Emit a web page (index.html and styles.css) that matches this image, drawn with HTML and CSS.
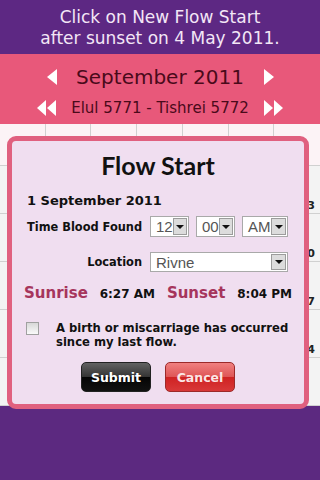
FILE: index.html
```html
<!DOCTYPE html>
<html>
  <head>
    <meta charset="UTF-8" />
    <title>Flow Start</title>
    <link rel="stylesheet" href="styles.css">
  </head>
  <body>
    <div class="screen">
      <header class="notice">Click on New Flow Start<br />after sunset on 4 May 2011.</header>
      <section class="month-bar">
        <div class="month-row">
          <span class="tri tri-left"></span>
          <h1 class="month">September 2011</h1>
          <span class="tri tri-right"></span>
        </div>
        <div class="heb-row">
          <span class="dbl"><span class="tri tri-left"></span><span class="tri tri-left"></span></span>
          <span class="heb">Elul 5771 - Tishrei 5772</span>
          <span class="dbl"><span class="tri tri-right"></span><span class="tri tri-right"></span></span>
        </div>
      </section>
      <div class="calendar">
        <div class="grid">
          <div class="cell head"></div><div class="cell head"></div><div class="cell head"></div><div class="cell head"></div><div class="cell head"></div><div class="cell head"></div><div class="cell head"></div>
          <div class="cell"></div><div class="cell"></div><div class="cell"></div><div class="cell"></div><div class="cell"></div><div class="cell"></div><div class="cell">3</div>
          <div class="cell"></div><div class="cell"></div><div class="cell"></div><div class="cell"></div><div class="cell"></div><div class="cell"></div><div class="cell">10</div>
          <div class="cell"></div><div class="cell"></div><div class="cell"></div><div class="cell"></div><div class="cell"></div><div class="cell"></div><div class="cell">17</div>
          <div class="cell"></div><div class="cell"></div><div class="cell"></div><div class="cell"></div><div class="cell"></div><div class="cell"></div><div class="cell">24</div>
          <div class="cell"></div><div class="cell"></div><div class="cell"></div><div class="cell"></div><div class="cell"></div><div class="cell"></div><div class="cell"></div>
        </div>

        <div class="dialog">
          <h2 class="dialog-title">Flow Start</h2>
          <p class="date">1 September 2011</p>
          <div class="form">
            <label class="label">Time Blood Found</label>
            <div class="controls">
              <span class="select w-12"><span class="value">12</span><span class="arrow"></span></span>
              <span class="select w-00"><span class="value">00</span><span class="arrow"></span></span>
              <span class="select w-am"><span class="value">AM</span><span class="arrow"></span></span>
            </div>
            <label class="label">Location</label>
            <div class="controls">
              <span class="select w-loc"><span class="value">Rivne</span><span class="arrow"></span></span>
            </div>
          </div>
          <div class="sun">
            <span class="sun-label">Sunrise</span>
            <span class="sun-time">6:27 AM</span>
            <span class="sun-label">Sunset</span>
            <span class="sun-time">8:04 PM</span>
          </div>
          <div class="check-row">
            <span class="checkbox"></span>
            <p class="check-text">A birth or miscarriage has occurred<br />since my last flow.</p>
          </div>
          <div class="buttons">
            <button class="btn btn-submit">Submit</button>
            <button class="btn btn-cancel">Cancel</button>
          </div>
        </div>
      </div>
    </div>
  </body>
</html>
```

FILE: styles.css
```css
* { box-sizing: border-box; }
body {
	margin: 0;
	background-color: #5c2980;
	font-family: "DejaVu Sans", Verdana, sans-serif;
}
.screen {
	width: 320px;
	height: 480px;
	display: flex;
	flex-direction: column;
	background-color: #5c2980;
}

/* top notice */
.notice {
	height: 54px;
	padding-top: 7px;
	text-align: center;
	color: #f3e6f6;
	font-size: 17px;
	line-height: 21px;
	background-color: #5d2883;
}

/* month bar */
.month-bar {
	height: 70px;
	background-color: #e8587a;
	padding-top: 10px;
}
.month-row, .heb-row {
	display: flex;
	align-items: center;
	justify-content: center;
}
.month-row { height: 26px; }
.heb-row { height: 22px; margin-top: 7px; }
.month {
	margin: 0;
	font-weight: normal;
	font-size: 20px;
	color: #4a0a1a;
	width: 207px;
	text-align: center;
}
.heb {
	font-size: 15px;
	color: #4a0a1a;
	width: 208px;
	text-align: center;
}
.tri {
	width: 0;
	height: 0;
	border-top: 8px solid transparent;
	border-bottom: 8px solid transparent;
}
.tri-left { border-right: 10px solid #fff; }
.tri-right { border-left: 10px solid #fff; }
.dbl { display: flex; width: 19px; }
.dbl .tri-left { border-right-width: 9px; }
.dbl .tri-right { border-left-width: 9px; }
.dbl .tri + .tri { margin-left: 1px; }

/* calendar behind the dialog */
.calendar {
	position: relative;
	height: 286px;
}
.grid {
	display: grid;
	grid-template-columns: repeat(7, 1fr);
	grid-template-rows: 42px repeat(5, 48px);
	background-color: #fff;
}
.cell {
	border-right: 1px solid #d0d0d0;
	border-bottom: 1px solid #d0d0d0;
	background-color: #f3f3f3;
	display: flex;
	align-items: flex-end;
	justify-content: flex-end;
	padding: 0 5px 1px 0;
	font-size: 11px;
	font-weight: bold;
	color: #222;
}
.cell.head { background-color: #fcf3f6; }
.cell:nth-child(7n) { border-right: none; }

/* dialog */
.dialog {
	position: absolute;
	left: 7px;
	top: 12px;
	width: 302px;
	height: 273px;
	border: 5px solid #e0607f;
	border-radius: 9px;
	background-color: #f0def0;
	padding: 0 12px;
	color: #111;
}
.dialog-title {
	margin: 9px 0 0;
	text-align: center;
	font-family: Lato, "DejaVu Sans", sans-serif;
	font-size: 25px;
	line-height: 30px;
	font-weight: bold;
}
.date {
	margin: 12px 0 0 3px;
	font-size: 13px;
	line-height: 17px;
	font-weight: bold;
}
.form {
	display: grid;
	grid-template-columns: 115px 1fr;
	column-gap: 8px;
	row-gap: 15px;
	align-items: center;
	margin: 7px 0 0 3px;
}
.label {
	text-align: right;
	white-space: nowrap;
	font-size: 11.4px;
	font-weight: bold;
}
.controls { display: flex; gap: 7px; }
.select {
	display: flex;
	height: 21px;
	border: 1px solid #a9a9a9;
	background-color: #fff;
	padding: 1px;
}
.select .value {
	flex: 1;
	font-family: "Liberation Sans", Arial, sans-serif;
	font-size: 15px;
	line-height: 17px;
	color: #555;
	padding-left: 4px;
}
.select .arrow {
	width: 15px;
	background-color: #dcdcdc;
	border: 1px solid #9c9c9c;
	display: flex;
	align-items: center;
	justify-content: center;
}
.select .arrow::after {
	content: "";
	border-left: 4px solid transparent;
	border-right: 4px solid transparent;
	border-top: 4px solid #111;
}
.w-12 { width: 39px; }
.w-00 { width: 39px; }
.w-am { width: 46px; }
.w-loc { width: 138px; height: 20px; }

.sun {
	display: flex;
	justify-content: space-between;
	align-items: baseline;
	margin-top: 12px;
}
.sun-label {
	font-size: 15px;
	font-weight: bold;
	color: #a6355c;
}
.sun-time {
	font-size: 12px;
	font-weight: bold;
}
.check-row {
	display: flex;
	align-items: flex-start;
	margin-top: 19px;
	padding-left: 2px;
}
.checkbox {
	width: 13px;
	height: 13px;
	margin-top: 1px;
	border: 1px solid #a0a0a0;
	background: linear-gradient(#d8d8d8, #fafafa);
	flex: none;
}
.check-text {
	margin: 0 0 0 17px;
	font-size: 11.6px;
	line-height: 14px;
	font-weight: bold;
	white-space: nowrap;
}
.buttons {
	display: flex;
	justify-content: center;
	gap: 14px;
	margin-top: 13px;
}
.btn {
	width: 70px;
	height: 30px;
	border-radius: 5px;
	font-family: "DejaVu Sans", Verdana, sans-serif;
	font-size: 12.5px;
	font-weight: bold;
	color: #fff;
	padding: 0;
}
.btn-submit {
	border: 1px solid #222;
	background: linear-gradient(#626262, #333 50%, #050505 50%, #111);
}
.btn-cancel {
	border: 1px solid #9c2a2a;
	color: #fbe6e6;
	background: linear-gradient(#f08080, #de5656 50%, #cf2222 50%, #d83838);
}
```
